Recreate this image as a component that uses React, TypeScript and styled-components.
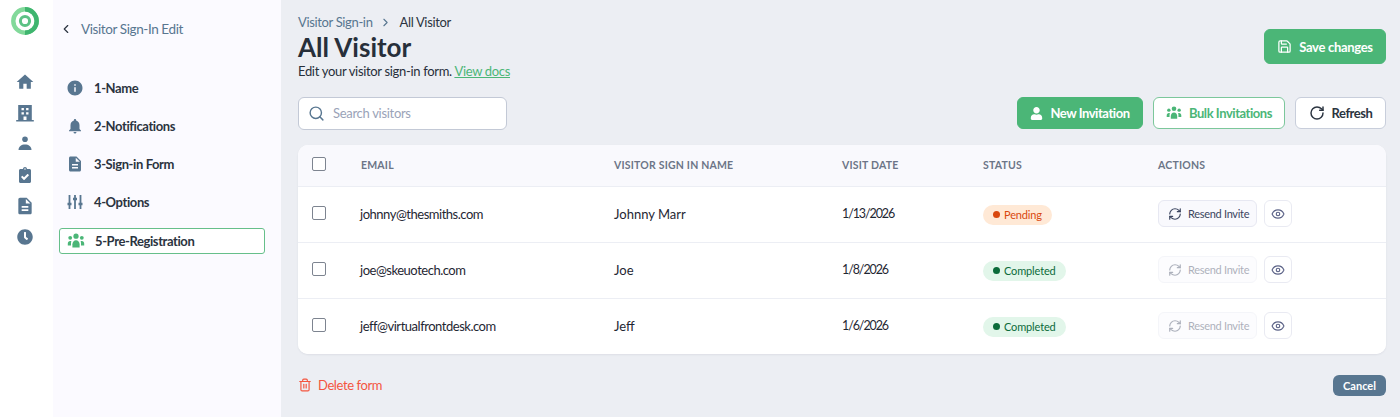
import { createGlobalStyle, styled } from "styled-components";
import { ChevronLeft, ChevronRight, Eye, RefreshCw, RotateCw, Save, Search, Trash2 } from "lucide-react";
import { FaClipboardCheck, FaClock, FaUser } from "react-icons/fa";
import { MdDescription, MdHome, MdInfo, MdNotifications } from "react-icons/md";

const GlobalStyle = createGlobalStyle`
  html, body { margin: 0; padding: 0; }
  body { font-family: "Lato", "Liberation Sans", sans-serif; }
  * { box-sizing: border-box; }
`;

const Page = styled.div`
  display: flex;
  height: 417px;
  width: 1400px;
  overflow: hidden;
  background: #eceef3;
`;

const Rail = styled.nav`
  width: 53px;
  flex: none;
  background: #fff;
  display: flex;
  flex-direction: column;
  align-items: center;
  padding: 7px 3px 0 0;
`;

const RailIcons = styled.div`
  margin-top: 31px;
  display: grid;
  grid-auto-rows: 31px;
  justify-items: center;
  align-items: center;
  color: #587690;
  svg { display: block; }
`;

const Sidebar = styled.aside`
  width: 228px;
  flex: none;
  background: #fbfaff;
  padding: 19px 16px 0 6px;
`;

const BackLink = styled.div`
  display: flex;
  align-items: center;
  gap: 8px;
  height: 20px;
  color: #587690;
  font-size: 13.5px;
  letter-spacing: -0.4px;
`;

const Steps = styled.div`
  margin-top: 30px;
  display: flex;
  flex-direction: column;
`;

const Step = styled.div<{ $active?: boolean }>`
  display: flex;
  align-items: center;
  gap: 10px;
  height: ${(p) => (p.$active ? "26px" : "38px")};
  margin-top: ${(p) => (p.$active ? "7px" : "0")};
  padding-left: 7px;
  border: ${(p) => (p.$active ? "1px solid #66bf8a" : "none")};
  border-radius: 3px;
  background: ${(p) => (p.$active ? "#fff" : "transparent")};
  color: #2b3440;
  font-size: 13px;
  font-weight: 700;
  letter-spacing: -0.4px;
  svg { color: ${(p) => (p.$active ? "#4bb677" : "#587690")}; flex: none; }
`;

const Main = styled.main`
  flex: 1;
  min-width: 0;
  padding: 13px 14px 0 17px;
  display: flex;
  flex-direction: column;
`;

const Header = styled.header`
  display: flex;
  justify-content: space-between;
  align-items: flex-start;
  height: 70px;
`;

const Crumbs = styled.div`
  display: flex;
  align-items: center;
  gap: 6px;
  height: 18px;
  font-size: 13px;
  letter-spacing: -0.35px;
  color: #587690;
  b { font-weight: 400; color: #2b3440; margin-left: 2px; }
`;

const Title = styled.h1`
  margin: 1px 0 0;
  font-size: 26px;
  line-height: 30px;
  font-weight: 700;
  color: #272f3a;
`;

const Sub = styled.p`
  margin: 1px 0 0;
  font-size: 13px;
  line-height: 16px;
  letter-spacing: -0.32px;
  color: #272f3a;
  a { color: #4bb677; text-decoration: underline; }
`;

const Button = styled.button<{ $kind: "solid" | "outline" | "plain"; $width: number }>`
  display: inline-flex;
  align-items: center;
  justify-content: center;
  gap: 7px;
  width: ${(p) => p.$width}px;
  height: 32px;
  border-radius: 6px;
  font-family: inherit;
  font-size: 13px;
  font-weight: 700;
  letter-spacing: -0.45px;
  cursor: pointer;
  background: ${(p) => (p.$kind === "solid" ? "#4bb677" : "#fff")};
  color: ${(p) => (p.$kind === "solid" ? "#fff" : p.$kind === "outline" ? "#4bb677" : "#2b3440")};
  border: 1px solid ${(p) => (p.$kind === "solid" ? "#4bb677" : p.$kind === "outline" ? "#7cc79b" : "#c8cedb")};
`;

const SaveButton = styled(Button)`
  height: 35px;
  margin-top: 16px;
  letter-spacing: -0.3px;
`;

const Toolbar = styled.div`
  margin-top: 14px;
  display: flex;
  align-items: center;
  gap: 10px;
  height: 32px;
`;

const SearchBox = styled.label`
  width: 209px;
  height: 33px;
  margin-right: auto;
  display: flex;
  align-items: center;
  gap: 8px;
  padding-left: 9px;
  background: #fff;
  border: 1.5px solid #c3c9d6;
  border-radius: 6px;
  color: #587690;
  span { color: #9aa3b8; font-size: 13px; letter-spacing: -0.3px; }
`;

const Table = styled.div`
  margin-top: 16px;
  background: #fff;
  border-radius: 10px;
  overflow: hidden;
  box-shadow: 0 1px 2px rgba(40, 50, 80, 0.08);
`;

const Row = styled.div<{ $head?: boolean }>`
  display: grid;
  grid-template-columns: 63px 253px 228px 141px 175px 1fr;
  align-items: center;
  height: ${(p) => (p.$head ? "41px" : "56px")};
  padding-bottom: ${(p) => (p.$head ? "1px" : "2px")};
  background: ${(p) => (p.$head ? "#f9f9fd" : "#fff")};
  border-top: ${(p) => (p.$head ? "none" : "1px solid #eceef4")};
  font-size: ${(p) => (p.$head ? "10.5px" : "13px")};
  font-weight: ${(p) => (p.$head ? 700 : 400)};
  letter-spacing: ${(p) => (p.$head ? "0.2px" : "0")};
  color: ${(p) => (p.$head ? "#6c7587" : "#1f2733")};
`;

const Email = styled.span`
  margin-left: -1px;
  letter-spacing: -0.48px;
`;

const VisitDate = styled.span`
  font-size: 12.5px;
  letter-spacing: -1.1px;
`;

const Check = styled.span`
  display: block;
  margin-left: 14px;
  margin-bottom: 2px;
  width: 14px;
  height: 14px;
  border: 1px solid #7d8490;
  border-radius: 2px;
  background: #fff;
`;

const StatusCell = styled.div`
  display: flex;
  padding-top: 2px;
`;

const Badge = styled.span<{ $done?: boolean }>`
  display: inline-flex;
  align-items: center;
  gap: 4px;
  height: 20px;
  padding: 0 10px 0 10px;
  border-radius: 10px;
  font-size: 11px;
  letter-spacing: -0.15px;
  background: ${(p) => (p.$done ? "#e2f6ea" : "#ffe9d6")};
  color: ${(p) => (p.$done ? "#0b6b3a" : "#d9480f")};
  &::before {
    content: "";
    width: 7px;
    height: 7px;
    border-radius: 50%;
    background: currentColor;
  }
`;

const Actions = styled.div`
  display: flex;
  align-items: center;
  gap: 7px;
`;

const Resend = styled.span<{ $off?: boolean }>`
  display: inline-flex;
  align-items: center;
  gap: 6px;
  width: 99px;
  height: 27px;
  padding-left: 9px;
  border-radius: 6px;
  border: 1px solid #e7e8f2;
  background: #f9f9fd;
  font-size: 11px;
  letter-spacing: -0.3px;
  color: #3b4560;
  ${(p) => p.$off && "opacity: 0.42;"}
`;

const EyeButton = styled.span`
  display: inline-flex;
  align-items: center;
  justify-content: center;
  width: 28px;
  height: 27px;
  border-radius: 6px;
  border: 1px solid #e9eaf2;
  color: #5d6488;
`;

const Footer = styled.footer`
  display: flex;
  align-items: center;
  justify-content: space-between;
  margin-top: 20px;
  height: 22px;
`;

const Delete = styled.span`
  display: inline-flex;
  align-items: center;
  gap: 6px;
  color: #f4553f;
  font-size: 13px;
  letter-spacing: -0.4px;
`;

const Cancel = styled.span`
  display: inline-flex;
  align-items: center;
  justify-content: center;
  width: 53px;
  height: 21px;
  border-radius: 6px;
  background: #587690;
  color: #fff;
  font-size: 11px;
  font-weight: 700;
`;

const BuildingIcon = () => (
  <svg width="18" height="18" viewBox="0 0 18 18" fill="currentColor">
    <path
      fillRule="evenodd"
      d="M2.2 1h13.6v15h2v1.5H.2V16h2V1zm3.3 3v2.2h2.4V4H5.500zm4.600 0v2.200h2.400V4h-2.400zM5.500 8.200v2.200h2.400V8.200H5.500zm4.600 0v2.200h2.400V8.200h-2.400zM7.500 16h3v-3.500h-3V16z"
    />
  </svg>
);

const PersonIcon = () => (
  <svg width="14" height="15" viewBox="0 0 14 15" fill="currentColor">
    <circle cx="7" cy="3.2" r="2.8" />
    <path d="M0.5 14c0-3.600 2.900-5.600 6.500-5.600s6.500 2 6.500 5.600H0.500z" />
  </svg>
);

const OptionsIcon = () => (
  <svg width="18" height="18" viewBox="0 0 18 18" fill="none" stroke="currentColor" strokeWidth="1.8">
    <path d="M3.500 2v14M9 2v14M14.500 2v14" />
    <path d="M1.500 11h4M7 6h4M12.500 11h4" strokeWidth="2.400" />
  </svg>
);

const GroupIcon = ({ size }: { size: number }) => (
  <svg width={size} height={size} viewBox="0 0 18 18" fill="currentColor">
    <circle cx="9" cy="4.200" r="2.600" />
    <circle cx="3.200" cy="5.800" r="1.900" />
    <circle cx="14.800" cy="5.800" r="1.900" />
    <path d="M5.400 15.500v-3.200c0-2.200 1.600-4 3.600-4s3.600 1.800 3.600 4v3.200H5.400z" />
    <path d="M0.800 13.500v-2c0-1.500 1-2.600 2.400-2.600.5 0 .9.100 1.200.3-.3.700-.4 1.400-.4 2.200v2.100H0.800z" />
    <path d="M17.200 13.500v-2c0-1.500-1-2.600-2.400-2.600-.5 0-.9.100-1.200.3.3.700.4 1.400.4 2.200v2.100h3.200z" />
  </svg>
);

const Logo = () => (
  <svg width="28" height="28" viewBox="0 0 28 28" fill="none">
    <circle cx="14" cy="14" r="11.700" stroke="#82d99a" strokeWidth="4.400" />
    <path d="M14 2.300a11.700 11.700 0 0 1 0 23.400" stroke="#3fb56f" strokeWidth="4.400" />
    <circle cx="14" cy="14" r="4.600" stroke="#5cc285" strokeWidth="3" />
  </svg>
);

const steps = [
  { label: "1-Name", icon: <MdInfo size={18} /> },
  { label: "2-Notifications", icon: <MdNotifications size={18} /> },
  { label: "3-Sign-in Form", icon: <MdDescription size={18} /> },
  { label: "4-Options", icon: <OptionsIcon /> },
];

const visitors = [
  { email: "johnny@thesmiths.com", name: "Johnny Marr", date: "1/13/2026", done: false },
  { email: "joe@skeuotech.com", name: "Joe", date: "1/8/2026", done: true },
  { email: "jeff@virtualfrontdesk.com", name: "Jeff", date: "1/6/2026", done: true },
];

export default function App() {
  return (
    <Page>
      <GlobalStyle />
      <Rail>
        <Logo />
        <RailIcons>
          <MdHome size={20} />
          <BuildingIcon />
          <PersonIcon />
          <FaClipboardCheck size={16} />
          <MdDescription size={20} />
          <FaClock size={16} />
        </RailIcons>
      </Rail>
      <Sidebar>
        <BackLink>
          <ChevronLeft size={14} color="#2b3440" />
          Visitor Sign-In Edit
        </BackLink>
        <Steps>
          {steps.map((s) => (
            <Step key={s.label}>
              {s.icon}
              {s.label}
            </Step>
          ))}
          <Step $active>
            <GroupIcon size={18} />
            5-Pre-Registration
          </Step>
        </Steps>
      </Sidebar>
      <Main>
        <Header>
          <div>
            <Crumbs>
              Visitor Sign-in
              <ChevronRight size={13} />
              <b>All Visitor</b>
            </Crumbs>
            <Title>All Visitor</Title>
            <Sub>
              Edit your visitor sign-in form. <a>View docs</a>
            </Sub>
          </div>
          <SaveButton $kind="solid" $width={122}>
            <Save size={15} />
            Save changes
          </SaveButton>
        </Header>
        <Toolbar>
          <SearchBox>
            <Search size={17} />
            <span>Search visitors</span>
          </SearchBox>
          <Button $kind="solid" $width={126}>
            <FaUser size={13} />
            New Invitation
          </Button>
          <Button $kind="outline" $width={132}>
            <GroupIcon size={16} />
            Bulk Invitations
          </Button>
          <Button $kind="plain" $width={91}>
            <RotateCw size={16} strokeWidth={2.2} />
            Refresh
          </Button>
        </Toolbar>
        <Table>
          <Row $head>
            <Check />
            <span>EMAIL</span>
            <span>VISITOR SIGN IN NAME</span>
            <span>VISIT DATE</span>
            <span>STATUS</span>
            <span>ACTIONS</span>
          </Row>
          {visitors.map((v) => (
            <Row key={v.email}>
              <Check />
              <Email>{v.email}</Email>
              <span>{v.name}</span>
              <VisitDate>{v.date}</VisitDate>
              <StatusCell>
                <Badge $done={v.done}>{v.done ? "Completed" : "Pending"}</Badge>
              </StatusCell>
              <Actions>
                <Resend $off={v.done}>
                  <RefreshCw size={14} />
                  Resend Invite
                </Resend>
                <EyeButton>
                  <Eye size={14} />
                </EyeButton>
              </Actions>
            </Row>
          ))}
        </Table>
        <Footer>
          <Delete>
            <Trash2 size={14} />
            Delete form
          </Delete>
          <Cancel>Cancel</Cancel>
        </Footer>
      </Main>
    </Page>
  );
}
